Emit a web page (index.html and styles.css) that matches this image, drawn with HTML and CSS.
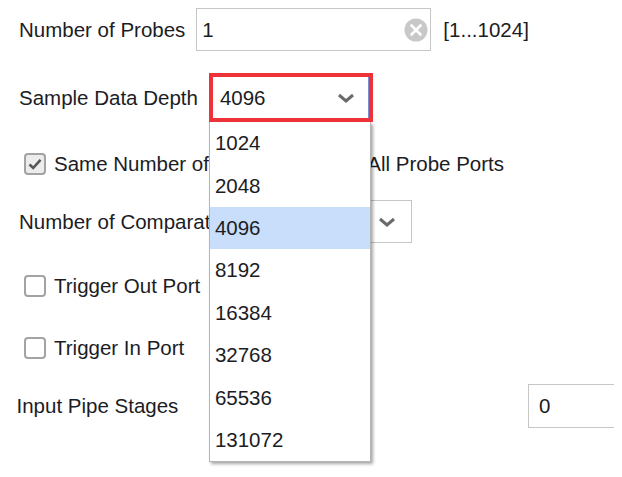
FILE: index.html
```html
<!DOCTYPE html>
<html>
<head>
<meta charset="utf-8">
<link rel="stylesheet" href="styles.css">
</head>
<body>
<div class="panel">
  <div class="row row-probes">
    <span class="label">Number of Probes</span>
    <div class="textbox probes">
      <span class="val">1</span>
      <svg class="clear" width="24" height="24" viewBox="0 0 24 24"><circle cx="12" cy="12" r="11.5" fill="#c8c8c8"/><path d="M7.5 7.5 L16.5 16.5 M16.5 7.5 L7.5 16.5" stroke="#fff" stroke-width="2.6" stroke-linecap="round"/></svg>
    </div>
    <span class="range">[1...1024]</span>
  </div>

  <div class="row row-depth">
    <span class="label">Sample Data Depth</span>
    <div class="select focused">
      <span class="val">4096</span>
      <svg class="chev" width="18" height="10" viewBox="0 0 18 10"><path d="M2 2 L9 8 L16 2" fill="none" stroke="#6a6a6a" stroke-width="3"/></svg>
      <ul class="dropdown">
        <li>1024</li>
        <li>2048</li>
        <li class="sel">4096</li>
        <li>8192</li>
        <li>16384</li>
        <li>32768</li>
        <li>65536</li>
        <li>131072</li>
      </ul>
    </div>
  </div>

  <div class="row row-check1">
    <span class="checkbox checked"><svg width="18" height="18" viewBox="0 0 18 18"><path d="M3.5 9.5 L7.2 13 L14.5 4.8" fill="none" stroke="#555" stroke-width="2.6"/></svg></span>
    <span class="clabel">Same Number of Comparators for All Probe Ports</span>
  </div>

  <div class="row row-comp">
    <span class="label">Number of Comparators</span>
    <div class="select comp">
      <svg class="chev" width="18" height="10" viewBox="0 0 18 10"><path d="M2 2 L9 8 L16 2" fill="none" stroke="#6a6a6a" stroke-width="3"/></svg>
    </div>
  </div>

  <div class="row row-tout">
    <span class="checkbox"></span>
    <span class="clabel">Trigger Out Port</span>
  </div>

  <div class="row row-tin">
    <span class="checkbox"></span>
    <span class="clabel">Trigger In Port</span>
  </div>

  <div class="row row-pipe">
    <span class="label pipe-label">Input Pipe Stages</span>
    <div class="textbox pipe"><span class="val">0</span></div>
  </div>
</div>
</body>
</html>
```

FILE: styles.css
```css
html, body {
  margin: 0;
  padding: 0;
  background: #ffffff;
}
body {
  font-family: "Liberation Sans", Arial, sans-serif;
  font-size: 20.5px;
  color: #1c1c24;
}
.panel {
  width: 614px;
  height: 477px;
  overflow: hidden;
  display: flex;
  flex-direction: column;
  padding-top: 8px;
  box-sizing: border-box;
}
.row {
  display: flex;
  align-items: center;
  flex-shrink: 0;
}
.label {
  padding-left: 19px;
  white-space: nowrap;
}
.row-probes { height: 43px; }
.row-depth { height: 49px; margin-top: 22px; position: relative; z-index: 5; }
.row-check1 { height: 24px; margin-top: 30px; }
.row-comp { height: 43px; margin-top: 24px; }
.row-tout { height: 24px; margin-top: 31px; }
.row-tin { height: 24px; margin-top: 38px; }
.row-pipe { height: 44px; margin-top: 24px; }

.textbox {
  box-sizing: border-box;
  border: 1px solid #c6c6c6;
  background: #fff;
  display: flex;
  align-items: center;
  height: 100%;
}
.probes {
  width: 235px;
  margin-left: 11px;
  padding: 0 2px 0 5px;
  justify-content: space-between;
}
.clear { display: block; }
.range {
  margin-left: 12px;
}

.select {
  box-sizing: border-box;
  height: 100%;
  display: flex;
  align-items: center;
  justify-content: space-between;
  background: #fff;
  position: relative;
}
.focused {
  width: 164px;
  margin-left: 11px;
  border: 4px solid #ee3338;
  box-shadow: inset -1px 0 0 #7a8fd6;
  padding: 0 14px 0 7px;
}
.comp {
  width: 162px;
  margin-left: 11px;
  border: 1px solid #c6c6c6;
  padding: 0 15px 0 8px;
  justify-content: flex-end;
}
.chev { display: block; }

.dropdown {
  position: absolute;
  top: calc(100% + 4px);
  left: -4px;
  width: 162px;
  height: 340px;
  margin: 0;
  padding: 0;
  list-style: none;
  box-sizing: border-box;
  background: #fff;
  border: 1px solid #b4b4b4;
  border-top: none;
  box-shadow: 2px 2px 3px rgba(0, 0, 0, 0.35);
  display: flex;
  flex-direction: column;
  z-index: 10;
}
.dropdown li {
  height: 42.4px;
  flex-shrink: 0;
  display: flex;
  align-items: center;
  padding-left: 5px;
}
.dropdown li.sel {
  background: #c9defb;
}

.checkbox {
  box-sizing: border-box;
  width: 22px;
  height: 22px;
  margin-left: 24px;
  border: 2px solid #a3a3a3;
  border-radius: 4px;
  background: #fff;
  display: flex;
  align-items: center;
  justify-content: center;
  flex-shrink: 0;
}
.checkbox.checked {
  background: #ececec;
}
.checkbox svg { display: block; }
.clabel {
  margin-left: 8px;
  white-space: nowrap;
}

.pipe-label {
  padding-left: 16.5px;
}
.pipe {
  width: 126px;
  margin-left: auto;
  margin-right: -40px;
  padding-left: 10px;
}
```
